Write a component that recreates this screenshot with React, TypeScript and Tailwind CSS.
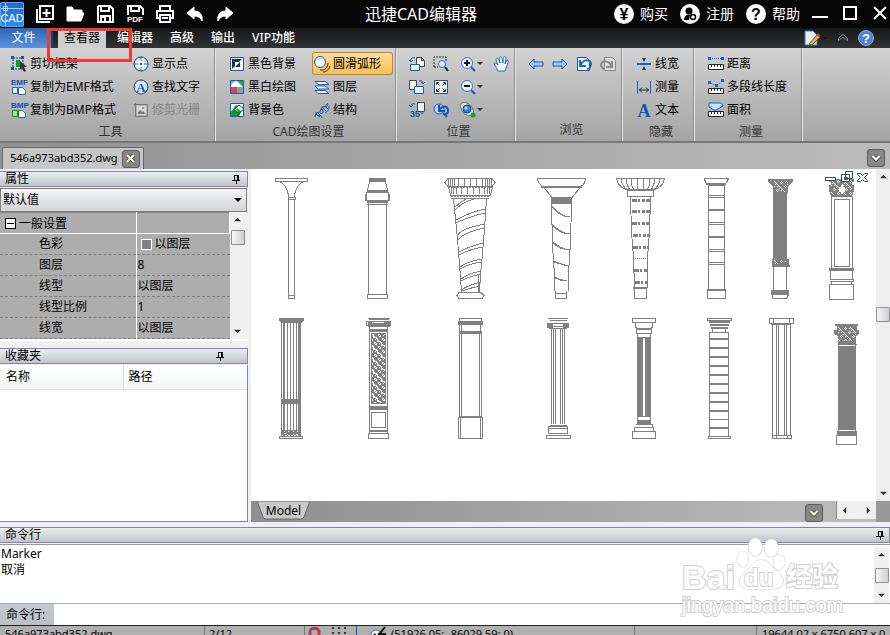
import { useState } from 'react';
import type { ReactNode } from 'react';

const tabs = ['查看器', '编辑器', '高级', '输出', 'VIP功能'];

const properties = [
  ['色彩', '以图层'],
  ['图层', '8'],
  ['线型', '以图层'],
  ['线型比例', '1'],
  ['线宽', '以图层'],
];

function Icon({ children, size = 16 }: { children: ReactNode; size?: number }) {
  return (
    <svg width={size} height={size} viewBox="0 0 16 16" fill="none" className="shrink-0 overflow-visible" aria-hidden="true">
      {children}
    </svg>
  );
}

const icons = {
  clip: (
    <Icon>
      <path d="M2 2h10v11H2z" stroke="#123a7c" strokeDasharray="2 1" />
      <path d="M0 0h3v3H0zM10 0h3v3h-3zM0 11h3v3H0z" fill="#1456b8" />
      <path d="M5 4h4v7H5z" fill="#129a2c" />
      <path d="M9 5v9l2-2 2 4 2-1-2-4h3z" fill="#333" />
    </Icon>
  ),
  emf: (
    <Icon>
      <text x="0" y="6" fill="#0f4fae" className="font-['Liberation_Sans'] text-[8px] font-bold">EMF</text>
      <path d="M1.5 8.5h5v6h-5z" fill="#e4efff" stroke="#1b62c4" />
      <path d="M7.5 8.5h4l3 3v4h-7z" fill="#fff" stroke="#1b62c4" />
    </Icon>
  ),
  bmp: (
    <Icon>
      <text x="0" y="6" fill="#0f4fae" className="font-['Liberation_Sans'] text-[8px] font-bold">BMP</text>
      <path d="M1.5 8.5h5v6h-5z" fill="#9be59b" stroke="#128a28" />
      <path d="M7.5 8.5h4l3 3v4h-7z" fill="#fff" stroke="#1d7a60" />
    </Icon>
  ),
  showPoint: (
    <Icon>
      <circle cx="8" cy="8" r="7" fill="#eef5ff" stroke="#1e3e6e" />
      <path d="M8 0v5M8 11v5M0 8h5M11 8h5" stroke="#2a6fc8" />
      <path d="M7 7h2v2H7z" fill="#1456b8" />
    </Icon>
  ),
  findText: (
    <Icon>
      <circle cx="8" cy="8" r="7" fill="#dcebff" stroke="#1e3e6e" />
      <path d="M8 0v3M0 8h3M13 8h3" stroke="#5b85b8" />
      <text x="8" y="13" textAnchor="middle" fill="#1456b8" className="font-['Liberation_Serif'] text-[13px] font-bold">A</text>
    </Icon>
  ),
  cropRaster: (
    <Icon>
      <path d="M2.5 1v13.5H15M1 2.500h13.500V15" stroke="#777" />
      <path d="M4 4h9v9H4z" fill="#d8d8d8" />
      <path d="m4 12 3-4 2 2 1-1 3 3z" fill="#777" />
      <path d="M9 5h2v2H9z" fill="#999" />
    </Icon>
  ),
  blackBg: (
    <Icon>
      <path d="M1.5 1.500h13v13h-13z" fill="#fff" stroke="#1b5ab8" />
      <path d="M3 3h10L3 13z" fill="#222f44" />
      <path d="M6 6h5v5H6z" fill="#fff" />
      <path d="M11 6v5H6z" fill="#222f44" />
    </Icon>
  ),
  blackWhite: (
    <Icon>
      <path d="M1.5 1.500h13v13h-13z" fill="#fff" stroke="#1b5ab8" />
      <path d="M8 2h6v6z" fill="#25a83c" />
      <path d="M2 8h6v6H2z" fill="#d84848" />
      <path d="M8 8h6v6H8z" fill="#999" />
      <path d="M2 6l4-4H2z" fill="#7da8e0" />
    </Icon>
  ),
  bgColor: (
    <Icon>
      <path d="M1.5 1.500h13v13h-13z" fill="#fff" stroke="#1b5ab8" />
      <path d="M2 14V9c3 0 2-5 6-6l5 6-3 5z" fill="#119a2b" />
      <path d="m5 8 5-5 5 4-5 4z" fill="#e2f5e4" stroke="#164d20" />
      <path d="m8 7 3 3" stroke="#129a2c" strokeWidth="2" />
    </Icon>
  ),
  smooth: (
    <Icon>
      <circle cx="6" cy="6" r="5.500" fill="#f2f7ff" stroke="#1b5ab8" />
      <path d="M6 14c5 1 8-3 8-7M9 16c4 0 6-3 7-6" stroke="#222" />
      <path d="M4 4c1-2 3-2 5-1" stroke="#aecbf2" />
    </Icon>
  ),
  layers: (
    <Icon>
      <path d="M1 11.500h10l4 3H4z" fill="#fff" stroke="#1a58b2" />
      <path d="M1 7h10l4 3H4z" fill="#fff" stroke="#1a58b2" />
      <path d="M1 2.500h10l4 3H4z" fill="#fff" stroke="#1a58b2" />
    </Icon>
  ),
  structure: (
    <Icon>
      <path d="M1 15c0-6 5-3 6-7s4-2 7-7M2 10c0 7 6 1 6 6M7 8c0-6 6-1 7-6M6 11c3 2 4-2 2-4m3 4c3-2 4-3 4-7" stroke="#1b55ad" />
      <path d="m3 10 4 4m-5-2 4 3m3-9 3 3m-1-5 3 3" stroke="#1b55ad" />
    </Icon>
  ),
  copyBack: (
    <Icon>
      <path d="M7.5 1.500h5l3 3v6h-8z" fill="#f6f6f6" stroke="#444" />
      <path d="M12.5 1v3.500H15" stroke="#444" />
      <path d="M1.5 8.500h9v6h-9z" fill="#e8f1ff" stroke="#1b5ab8" />
      <path d="M6 2C3 1 1 3 2 6M0 4l2 2 2-2" stroke="#1b5ab8" />
    </Icon>
  ),
  copyNext: (
    <Icon>
      <path d="M.5 1.500h7v9h-7z" fill="#f6f6f6" stroke="#444" />
      <path d="M5.5 7.500h9v7h-9z" fill="#e8f1ff" stroke="#1b5ab8" />
      <path d="M10 2c3-1 4 1 4 3M12 3l2 2 2-2" stroke="#1b5ab8" />
    </Icon>
  ),
  rotate: (
    <Icon>
      <path d="M8.5 .5h7v9h-7z" fill="#f6f6f6" stroke="#444" />
      <path d="M6 2C3 1 1 3 2 5M0 3l2 2 2-2" stroke="#1b5ab8" />
      <text x="1" y="15" fill="#174f9f" className="font-['Liberation_Sans'] text-[9px] font-bold">35°</text>
    </Icon>
  ),
  zoomWindow: (
    <Icon>
      <path d="M1 11V1h12v4M1 11h4" stroke="#222" strokeDasharray="2 1" />
      <circle cx="9" cy="8" r="3.500" fill="#dcecff" stroke="#3c6ca8" />
      <path d="m12 11 3 4" stroke="#222" strokeWidth="2" />
    </Icon>
  ),
  zoomExtents: (
    <Icon>
      <path d="M1.5 1.500h13v13h-13z" fill="#f1f1e8" stroke="#1d4f92" />
      <path d="M3.5 6V3.500H6M4 4l2.500 2.500M10 3.500h2.500V6M12 4 9.500 6.500M3.500 10v2.500H6M4 12l2.500-2.500M12.500 10v2.500H10M12 12 9.500 9.500" stroke="#333" />
    </Icon>
  ),
  zoomPrev: (
    <Icon>
      <circle cx="6" cy="7" r="5" fill="#b9d5fb" stroke="#1b5ab8" />
      <path d="m10 11 4 4" stroke="#1b5ab8" strokeWidth="2" />
      <path d="M6 3v6h6M6 9c3-6 9-6 9 0 0 2-1 3-3 3" stroke="#1456b8" strokeWidth="2" />
    </Icon>
  ),
  zoomIn: (
    <Icon>
      <circle cx="7" cy="7" r="5.500" fill="#eff6ff" stroke="#3974c2" />
      <path d="m11 11 4 4" stroke="#1b5ab8" strokeWidth="2" />
      <path d="M4 7h6M7 4v6" stroke="#111" strokeWidth="2" />
    </Icon>
  ),
  zoomOut: (
    <Icon>
      <circle cx="7" cy="7" r="5.500" fill="#eff6ff" stroke="#3974c2" />
      <path d="m11 11 4 4" stroke="#1b5ab8" strokeWidth="2" />
      <path d="M4 7h6" stroke="#111" strokeWidth="2" />
    </Icon>
  ),
  orbit: (
    <Icon>
      <ellipse cx="7" cy="7" rx="5" ry="8" transform="rotate(-42 7 7)" fill="#ddd" stroke="#777" />
      <circle cx="7" cy="7" r="4" fill="#3b7fd2" stroke="#174a90" />
      <circle cx="6" cy="6" r="1.500" fill="#b8dcff" />
      <circle cx="13" cy="13" r="2.500" fill="#18a030" />
    </Icon>
  ),
  pan: (
    <Icon>
      <path
        d="M5 15 3 11 1 8c0-2 2-1 4 1L3 4c0-2 2-2 3 0l1 3-1-5c1-2 2-1 3 0l1 5V2c1-2 3-1 3 0l-1 6 2-4c2 0 1 2 1 3l-2 5-1 3z"
        fill="#f5faff"
        stroke="#2b65b4"
      />
    </Icon>
  ),
  back: (
    <Icon>
      <path d="m1 8 5-5v3h9v4H6v3z" fill="#9fcaff" stroke="#1857b4" />
    </Icon>
  ),
  forward: (
    <Icon>
      <path d="m15 8-5-5v3H1v4h9v3z" fill="#9fcaff" stroke="#1857b4" />
    </Icon>
  ),
  viewBack: (
    <Icon>
      <path d="M1.5 1.500h9l3 3v10h-12z" fill="#f4f9ff" stroke="#1857b4" />
      <path d="M4 4v6h6M5 9c2-6 9-6 10-1 0 3-2 5-4 5" stroke="#1764cf" strokeWidth="2" />
    </Icon>
  ),
  viewNext: (
    <Icon>
      <path d="M4.5 1.500h8l3 3v10h-11z" fill="#ddd" stroke="#8c8c8c" />
      <path d="M12 5v6H6M11 10C9 4 2 4 1 9c0 2 2 4 4 4" stroke="#8c8c8c" strokeWidth="2" />
    </Icon>
  ),
  lineWidth: (
    <Icon>
      <path d="M1 7h14v2H1z" fill="#1764cf" />
      <path d="M6 2h4L8 6zM6 14h4l-2-4z" fill="#333" />
    </Icon>
  ),
  measure: (
    <Icon>
      <path d="M1.5 2v13M14.500 2v13" stroke="#1764cf" />
      <path d="M3 11h10M6 8.500 3.500 11 6 13.500M10 8.500l2.500 2.500-2.500 2.500" stroke="#222" />
    </Icon>
  ),
  text: (
    <Icon>
      <text x="8" y="15" textAnchor="middle" fill="#1456b8" className="font-['Liberation_Serif'] text-[18px] font-bold">A</text>
    </Icon>
  ),
  distance: (
    <Icon>
      <path d="M0 1h3v3H0zM13 1h3v3h-3z" fill="#1764cf" />
      <path d="M4 2.500h9" stroke="#1764cf" strokeDasharray="1 1" />
      <path d="M.5 8.500h15v5H.5z" fill="#fff" stroke="#222" />
      <path d="M3.500 9v2M6.500 9v2M9.500 9v2M12.500 9v2" stroke="#222" />
    </Icon>
  ),
  polyline: (
    <Icon>
      <path d="M0 2h3v3H0zM13 0h3v3h-3zM7 5h3v3H7z" fill="#1764cf" />
      <path d="m3 4 5 3 5-4" stroke="#1764cf" strokeDasharray="1 1" />
      <path d="M.5 9.500h15v5H.5z" fill="#fff" stroke="#222" />
      <path d="M3.500 10v2M6.500 10v2M9.500 10v2M12.500 10v2" stroke="#222" />
    </Icon>
  ),
  area: (
    <Icon>
      <path d="M1 1h12l2 3-7 4H6L1 5z" fill="#c9e1ff" stroke="#1764cf" />
      <path d="M.5 9.500h15v5H.5z" fill="#fff" stroke="#222" />
      <path d="M3.500 10v2M6.500 10v2M9.500 10v2M12.500 10v2" stroke="#222" />
    </Icon>
  ),
};

function Tool({ icon, label, active, disabled }: { icon: ReactNode; label: string; active?: boolean; disabled?: boolean }) {
  return (
    <button
      disabled={disabled}
      className={`flex h-[23px] items-center gap-[3px] whitespace-nowrap pl-[2px] ${active ? 'rounded-[3px] bg-gradient-to-b from-[#fddf9c] to-[#fbbd4c] pr-3 inset-ring inset-ring-[#b98a3c]' : ''} ${disabled ? 'text-[#858585]' : ''}`}
    >
      {icon}
      {label}
    </button>
  );
}

function IconTool({ icon, label, menu }: { icon: ReactNode; label: string; menu?: boolean }) {
  return (
    <button aria-label={label} className="flex h-[23px] items-center gap-[1px]">
      {icon}
      {menu && <span className="border-x-3 border-t-3 border-x-transparent border-t-[#333]" />}
    </button>
  );
}

function Group({ title, width, children }: { title: string; width: string; children: ReactNode }) {
  return (
    <section className={`flex shrink-0 flex-col border-r border-[#8f8f8f] pt-1 shadow-[1px_0_0_#e6e6e6] ${width}`}>
      <div className="flex h-[69px]">{children}</div>
      <h2 className="pl-[7px] text-center leading-[22px] text-[#333]">{title}</h2>
    </section>
  );
}

function Pin() {
  return (
    <svg width="8" height="10" viewBox="0 0 8 10" fill="none" stroke="#000" shapeRendering="crispEdges" aria-hidden="true">
      <path d="M2 6V1h4v5M5.500 1v5M0 6.500h8M4 6v4" />
    </svg>
  );
}

function PanelHeader({ title, pinClass = 'pr-[7px]' }: { title: string; pinClass?: string }) {
  return (
    <div className={`flex h-[16px] shrink-0 items-center justify-between border border-l-0 border-[#83869a] bg-gradient-to-b from-[#eceef0] to-[#c0c4cb] pl-[5px] ${pinClass}`}>
      <h2 className="leading-[14px]">{title}</h2>
      <button aria-label="固定">
        <Pin />
      </button>
    </div>
  );
}

function ScrollArrow({ dir }: { dir: 'up' | 'down' | 'left' | 'right' }) {
  const paths = { up: 'M0 6h8L4 2z', down: 'M0 2h8L4 6z', left: 'M6 0v8L2 4z', right: 'M2 0v8l4-4z' };
  return (
    <button aria-label={dir} className="flex size-[15px] items-center justify-center">
      <svg width="7" height="7" viewBox="0 0 8 8" fill="#333" aria-hidden="true">
        <path d={paths[dir]} />
      </svg>
    </button>
  );
}

function Thumb() {
  return <div className="mx-auto h-[15px] w-[14px] shrink-0 rounded-[1px] border border-[#8e8e94] bg-gradient-to-r from-[#f6f6f6] to-[#cfcfd3]" />;
}

function ChevronButton() {
  return (
    <button aria-label="更多" className="flex size-[18px] items-center justify-center rounded-[3px] border border-[#5c5c5c] bg-[#878787]">
      <svg width="10" height="8" viewBox="0 0 10 8" fill="none" aria-hidden="true">
        <path d="m1.500 2 3.500 3.500L8.500 2" stroke="#5b5630" strokeWidth="4" />
        <path d="m1.500 2 3.500 3.500L8.500 2" stroke="#fff" strokeWidth="2" />
      </svg>
    </button>
  );
}

// White flecks scattered over a solid ornament
function Flecks({ x, y, w, h, step = 3 }: { x: number; y: number; w: number; h: number; step?: number }) {
  let d = '';
  for (let j = 0; j < h; j++) {
    for (let i = 0; i < w; i++) {
      if ((i * 7 + j * 5 + ((i * j) % 4)) % (step * 3) < 2) d += `M${x + i} ${y + j}h1v1h-1z`;
    }
  }
  return <path d={d} fill="#fff" stroke="none" />;
}

function Bar(props: { x: number; y: number; w: number; h: number }) {
  return <rect x={props.x} y={props.y} width={props.w} height={props.h} fill="#808080" stroke="none" />;
}

function Drawing() {
  return (
    <svg
      width="625"
      height="332"
      viewBox="251 169 625 332"
      fill="none"
      stroke="#808080"
      shapeRendering="crispEdges"
      role="img"
      aria-label="546a973abd352.dwg"
    >
      {/* top row */}
      <path d="M275.500 178.500h32v3h-32zM280 181.500c4 3 8 6 8.500 16M303 181.500c-4 3-8 6-8.500 16M288.500 199v99.500h6V199M288 197.500h7v2h-7zM288.500 295.500h6" />
      <Bar x={369} y={178} w={17} h={4} />
      <path d="M369.500 182l-2 8h20l-2-8M366.500 192h22v8h-22zM366.500 193l-1 2v5h24v-5l-1-2M367 204.500h21M368.500 200v94h18v-94M367.500 294.500h20v4h-20z" />
      <Bar x={367} y={190} w={21} h={2} />
      <Bar x={367} y={200} w={21} h={3} />

      <path d="M448 178.500h44l3 4-3 4h-44l-3-4zM448.500 187l2 8h40l2-8M450 195.500h40M451 198.500h38" />
      <path d="M448.500 179v7M450.500 179v7M452.500 179v7M454.500 179v7M458.500 179v7M464.500 179v7M470.500 179v7M476.500 179v7M482.500 179v7M485.500 179v7M487.500 179v7M489.500 179v7M491.500 179v7" />
      <path d="M451.500 187v7M453.500 187v7M456.500 187v7M461.500 187v7M467.500 187v7M473.500 187v7M479.500 187v7M484.500 187v7M487.500 187v7M489.500 187v7" />
      <path d="M448 187h44M451 196h38" strokeDasharray="2 1" />
      <path d="M453.500 199l2 20 2 20 2 25 2 28M486.500 199l-2 30-2 25-2 20-1 18M459 292.500h22l3 3-2 3h-23l-2-3zM478.500 275v17" />
      <path d="M454 208q6-6 12-9M454 211q8-9 20-12M456 220q12-7 29-11M456 223q12-6 29-10M457 238q0-9 28-14M458 240q6-8 27-12M459 252q11-6 24-9M459 255q11-6 24-8M460 267q6-5 22-8M460 269q8-5 22-7M461 279q6-5 20-8M461 281q6-4 20-7M461 290q8-5 19-8M462 291q8-3 18-5" />

      <path d="M537.500 178.500h48q0 5-5 8.500l-8 10h-21l-8-10q-6-3.500-6-8.500zM551.500 203l1 42 2 30v16M571.500 203l-1 40-2 30v18M555.500 291v7.500h11V291M556 293.500h11" />
      <path d="M541 186.500h41M541 187.500h41" />
      <Bar x={551} y={197} w={21} h={7} />
      <path d="M552 206q8 10 18 11M552 224q8 9 18 10M552 241q8 8 18 9M553 261l15 5M554 277q6 3 13 4M552 207q8 10 18 10M552 225q8 9 18 9M552 242q8 8 18 8M554 262l14 4M555 278q6 3 12 3" />

      <path d="M616.500 178.500h48q-1 8-10 11h-28q-9-3-10-11M621 179q1 8 7 11M626 179q1 7 4 11M631 179q0 7 3 11M637.500 179v11M643.500 179v11M650 179q0 7-3 11M655 179q-1 7-4 11M660 179q-1 8-7 11M627.500 190.500h26v6h-26zM630.500 197l1 35 2 25 1 31M650.500 197l-1 35-2 25v31M634.500 288v10.500h12V288" />
      <path d="M632 200h18M632 211.500h18M632 223h17M633 235h16M633 247h15M634 270h13M635 282h12" strokeWidth="3" strokeDasharray="5 1 2 2 3 1" />
      <path d="M635 258.500h12" strokeDasharray="1 1" />
      <Bar x={633} y={287} w={14} h={2} />

      <path d="M704.500 178.500h24l-2 4-2 3h-16l-3-3zM708.500 185v105M724.500 185v105M708 195.500h17M708 197.500h17M708 222.500h17M708 224.500h17M708 249.500h17M708 251.500h17M708 262.500h17M708 264.500h17M707.500 290.500h18v8h-18z" />
      <path d="M706 184h20M708 210h17M708 237h17M707 290h19" strokeWidth="2" />

      <path d="M768 179h25v3l-5 4v7h-15v-7l-5-4z" fill="#808080" stroke="none" />
      <Flecks x={774} y={181} w={14} h={11} step={4} />
      <Bar x={773} y={192} w={14} h={68} />
      <Bar x={772} y={259} w={17} h={6} />
      <Flecks x={774} y={260} w={12} h={4} step={4} />
      <path d="M772 265.500h17v1h-17M773.500 267v23M786.500 267v23M770.500 294.500h18l-2 4h-14v-4" />
      <Bar x={771} y={290} w={18} h={4} />

      <path d="M829 179h25v3h-2v3h2v6l-2 5h-21l-2-5v-6h2v-3h-2z" fill="#808080" stroke="none" />
      <Flecks x={831} y={180} w={21} h={15} step={4} />
      <path d="M839 187h2v-2h2v2h2v5h-2v2h-2v-2h-2z" fill="#fff" stroke="none" />
      <path d="M831.500 196.500h21v72h-21zM834.500 199.500h15v67h-15zM829.500 268.500h24v2h-24zM830.500 271v8h22v-8M829.500 279.500h24v2h-24M831.500 282v2h20v-2M829.500 284.500h24v15h-24z" />
      <Bar x={829} y={268} w={25} h={3} />

      {/* bottom row */}
      <path d="M279 318h25v3l-2 1v1h-21v-1l-2-1z" fill="#808080" stroke="none" />
      <path d="M281.500 323v113M283.500 323v113M284.500 323v113M287.500 323v113M290.500 323v113M293.500 323v113M296.500 323v113M298.500 323v113M299.500 323v113M300.500 323v113M279.500 436.500h23v2h-23z" />
      <Bar x={281} y={399} w={20} h={5} />
      <Bar x={281} y={430} w={20} h={5} />
      <Flecks x={284} y={431} w={14} h={4} />

      <path d="M368 318.500h22M369 319.500h20M366.500 321.500h24v4h-24zM369 326.500h19M387.500 327v106M369.500 327v106M371.500 412.500h14v15h-14zM368.500 433.500h20v5h-20z" />
      <Bar x={368} y={321} w={4} h={6} />
      <Bar x={384} y={321} w={6} h={6} />
      <Bar x={371} y={323} w={14} h={2} />
      <Bar x={369} y={329} w={19} h={3} />
      <Bar x={371} y={333} w={15} h={71} />
      <Flecks x={372} y={334} w={13} h={69} step={2} />
      <Bar x={369} y={406} w={19} h={4} />
      <Bar x={369} y={430} w={19} h={2} />

      <path d="M459.500 318.500h22v3h-22zM459.500 324v8M461.500 324v8M480.500 324v8M459.500 334v83M461.500 334v83M479.500 334v83M481.500 334v83M458.500 417.500h24v21h-24zM460.500 417v21M480.500 417v21" />
      <Bar x={458} y={321} w={25} h={4} />
      <Bar x={459} y={331} w={23} h={3} />
      <Bar x={459} y={416} w={23} h={2} />

      <path d="M548 318.500h20M549.500 320.500h17M547.500 323.500h21v3h-21zM549 328.500h18M551.500 329v95M553.500 329v95M555.500 329v95M560.500 329v95M562.500 329v95M564.500 329v95M550 425.500h17M548.500 426.500h19v7h-19zM548 428.500h20M546.500 435.500h24v3h-24z" />
      <Bar x={547} y={323} w={6} h={5} />
      <Bar x={563} y={323} w={6} h={5} />

      <path d="M632.500 318.500h23v4h-23zM635.500 323v4l1.500 2h14l1.500-2v-4M636.500 330v3h15v-3M637.500 333.500h13v4h-13zM637.500 416.500h13v4h-13zM636 424.500h16v3h-16M634.500 427.500h19v4h-19zM632.500 431.500h23v7h-23z" />
      <Bar x={636} y={328} w={16} h={2} />
      <Bar x={637} y={337} w={6} h={80} />
      <Bar x={645} y={337} w={6} h={80} />
      <Bar x={637} y={420} w={14} h={4} />

      <path d="M707.500 318.500h24v2h-24zM712.500 329v3h13v-3M709.500 332.500h19v104h-19zM708.500 436.500h22v2h-22zM709 419.500h20" />
      <Bar x={709} y={321} w={21} h={2} />
      <Bar x={710} y={324} w={19} h={2} />
      <Bar x={711} y={327} w={17} h={2} />
      <path d="M709 339h20M709 348h20M709 357h20M709 366h20M709 375h20M709 384h20M709 393h20M709 402h20M709 411h20M709 428h20" strokeWidth="2" />

      <path d="M769.500 318.500h24v5h-24zM773.500 318v5M789.500 318v5M771 324.500h20M772.500 324v111M776.500 324v111M778.500 324v111M784.500 324v111M786.500 324v111M790.500 324v111M772.500 435.500h19v3h-19zM776.500 435v3M787.500 435v3" />

      <path d="M835 324h23v2h-1v4h2v4l-3 2v8h-18v-8l-4-2v-4h3v-4h-2z" fill="#808080" stroke="none" />
      <Flecks x={838} y={327} w={18} h={14} step={4} />
      <path d="M837.500 344.500h19M838.500 345v90M855.500 345v90M837.500 431.500h19v3h-19zM836.500 435.500h20v9h-20z" />
      <Bar x={838} y={346} w={18} h={84} />
      <Bar x={837} y={432} w={20} h={3} />

      {/* child window buttons */}
      <g stroke="#34495e" fill="#fff" shapeRendering="auto">
        <path d="M825.500 177.500h10v3h-10zM845.500 171.500h7v7h-7zM841.500 174.500h8v7h-8zM844.500 177.500h3v2h-3z" />
        <path d="M857.500 173.500h3l2 2 2-2h3v1l-3 3 3 3v1h-3l-2-2-2 2h-3v-1l3-3-3-3z" />
      </g>
    </svg>
  );
}

function RoundIcon({ children }: { children: ReactNode }) {
  return (
    <svg width="20" height="20" viewBox="0 0 20 20" aria-hidden="true">
      <circle cx="10" cy="10" r="10" fill="#fff" />
      {children}
    </svg>
  );
}

function TitleBar() {
  const quick: [string, ReactNode][] = [
    ['新建', <path key="new" d="M4 1h13v13H4zM1 4v13h13M10.500 4v8M6.500 8h8" strokeWidth="2" />],
    ['打开', <path key="open" d="M1 16V2h5l2 3h8v3M1 16l4-8h13l-3 8z" fill="#fff" />],
    ['保存', <path key="save" d="M2 1h12l3 3v13H2V1m3 0v5h8V1M5 17v-6h9v6M6 12h3v4" strokeWidth="2" />],
    [
      '另存为PDF',
      <g key="pdf">
        <path d="M2 10V1h12l3 3v6M5 1v5h8V1" strokeWidth="2" />
        <text x="9" y="17" textAnchor="middle" fill="#fff" stroke="none" className="font-['Liberation_Sans'] text-[8px] font-bold">
          PDF
        </text>
      </g>,
    ],
    ['打印', <path key="print" d="M4 5V1h10v4M4 13H1V6h16v7h-3M4 10h10v7H4zM6 13h6" strokeWidth="2" />],
    ['撤销', <path key="undo" d="M1 8 8 2v4c6 0 9 4 8 10-1-3-4-5-8-5v3z" fill="#fff" />],
    ['重做', <path key="redo" d="m17 8-7-6v4C4 6 1 10 2 16c1-3 4-5 8-5v3z" fill="#fff" />],
  ];
  return (
    <header className="grid h-[28px] shrink-0 grid-cols-[1fr_auto_1fr] items-center bg-[#070707] text-sm text-white">
      <div className="flex items-center gap-3">
        <div className="relative flex h-[25px] w-6 items-end justify-center rounded-[2px] bg-gradient-to-b from-[#2a62c8] to-[#2090ee] font-['Liberation_Sans'] text-[11px] leading-[18px] inset-ring inset-ring-[#5fa5ee]">
          <svg width="24" height="25" viewBox="0 0 24 25" fill="none" stroke="#a9d0f8" className="absolute inset-0" aria-hidden="true">
            <path d="M5.500 1v23M1 6.500h22M3.500 4.500h4v4h-4z" />
          </svg>
          <span className="relative">CAD</span>
        </div>
        {quick.map(([label, path]) => (
          <button key={label} aria-label={label}>
            <svg width="18" height="18" viewBox="0 0 18 18" fill="none" stroke="#fff" aria-hidden="true">
              {path}
            </svg>
          </button>
        ))}
      </div>
      <h1 className="pr-12 text-base leading-7">迅捷CAD编辑器</h1>
      <div className="flex items-center justify-end gap-3 pr-[2px]">
        <button className="flex items-center gap-[6px]">
          <RoundIcon>
            <text x="10" y="16" textAnchor="middle" className="font-['Liberation_Sans'] text-[16px] font-bold">¥</text>
          </RoundIcon>
          购买
        </button>
        <button className="flex items-center gap-[6px]">
          <RoundIcon>
            <circle cx="9" cy="7" r="3.500" />
            <path d="M4 16c0-4 3-6 6-5l-1 5z" />
            <circle cx="13" cy="13" r="2.500" fill="#fff" stroke="#000" strokeWidth="1.500" />
          </RoundIcon>
          注册
        </button>
        <button className="flex items-center gap-[6px]">
          <RoundIcon>
            <text x="10" y="16" textAnchor="middle" className="font-['Liberation_Sans'] text-[16px] font-bold">?</text>
          </RoundIcon>
          帮助
        </button>
        <div className="flex gap-[14px]">
          <button aria-label="最小化">
            <svg width="16" height="16" viewBox="0 0 16 16" stroke="#fff" strokeWidth="2"><path d="M0 11h16" /></svg>
          </button>
          <button aria-label="最大化">
            <svg width="16" height="16" viewBox="0 0 16 16" fill="none" stroke="#fff" strokeWidth="2"><path d="M2 1h12v12H2z" /></svg>
          </button>
          <button aria-label="关闭">
            <svg width="16" height="16" viewBox="0 0 16 16" stroke="#fff" strokeWidth="2"><path d="m2 1 12 12M14 1 2 13" /></svg>
          </button>
        </div>
      </div>
    </header>
  );
}

function Ribbon() {
  return (
    <div className="flex h-[95px] shrink-0 overflow-hidden border-b-2 border-[#777] bg-gradient-to-b from-[#d2d2d2] to-[#a4a4a4]">
      <Group title="工具" width="w-[215px]">
        <div className="w-[122px] pl-[9px]">
          <Tool icon={icons.clip} label="剪切框架" />
          <Tool icon={icons.emf} label="复制为EMF格式" />
          <Tool icon={icons.bmp} label="复制为BMP格式" />
        </div>
        <div className="pl-[9px]">
          <Tool icon={icons.showPoint} label="显示点" />
          <Tool icon={icons.findText} label="查找文字" />
          <Tool icon={icons.cropRaster} label="修剪光栅" disabled />
        </div>
      </Group>
      <Group title="CAD绘图设置" width="w-[181px]">
        <div className="w-[97px] pl-3">
          <Tool icon={icons.blackBg} label="黑色背景" />
          <Tool icon={icons.blackWhite} label="黑白绘图" />
          <Tool icon={icons.bgColor} label="背景色" />
        </div>
        <div>
          <Tool icon={icons.smooth} label="圆滑弧形" active />
          <Tool icon={icons.layers} label="图层" />
          <Tool icon={icons.structure} label="结构" />
        </div>
      </Group>
      <Group title="位置" width="w-[119px]">
        <div className="flex gap-2 pl-[13px]">
          <div>
            <IconTool icon={icons.copyBack} label="上一视图" />
            <IconTool icon={icons.copyNext} label="下一视图" />
            <IconTool icon={icons.rotate} label="旋转" />
          </div>
          <div>
            <IconTool icon={icons.zoomWindow} label="窗口缩放" />
            <IconTool icon={icons.zoomExtents} label="全部显示" />
            <IconTool icon={icons.zoomPrev} label="上次缩放" />
          </div>
          <div className="pr-[2px] pl-[3px]">
            <IconTool icon={icons.zoomIn} label="放大" menu />
            <IconTool icon={icons.zoomOut} label="缩小" menu />
            <IconTool icon={icons.orbit} label="三维视图" menu />
          </div>
          <IconTool icon={icons.pan} label="平移" />
        </div>
      </Group>
      <Group title="浏览" width="w-[107px]">
        <div className="flex gap-2 pl-[13px]">
          <IconTool icon={icons.back} label="后退" />
          <IconTool icon={icons.forward} label="前进" />
          <IconTool icon={icons.viewBack} label="撤销视图" />
          <IconTool icon={icons.viewNext} label="重做视图" />
        </div>
      </Group>
      <Group title="隐藏" width="w-[72px]">
        <div className="pl-3">
          <Tool icon={icons.lineWidth} label="线宽" />
          <Tool icon={icons.measure} label="测量" />
          <Tool icon={icons.text} label="文本" />
        </div>
      </Group>
      <Group title="测量" width="w-[108px]">
        <div className="pl-3">
          <Tool icon={icons.distance} label="距离" />
          <Tool icon={icons.polyline} label="多段线长度" />
          <Tool icon={icons.area} label="面积" />
        </div>
      </Group>
    </div>
  );
}

function Watermark() {
  return (
    <div className="pointer-events-none absolute right-[48px] bottom-[10px] w-[160px] font-['Liberation_Sans','Noto_Sans_CJK_SC',sans-serif] text-white [-webkit-text-stroke:2px_#d0d0d0] [paint-order:stroke_fill]">
      <svg width="50" height="56" viewBox="0 0 44 56" preserveAspectRatio="none" fill="#fff" stroke="#d0d0d0" className="absolute bottom-[22px] left-[54px]" aria-hidden="true">
        <ellipse cx="17" cy="10" rx="6" ry="9" />
        <ellipse cx="31" cy="11" rx="6" ry="9" />
        <ellipse cx="6" cy="22" rx="5" ry="8" />
        <ellipse cx="38" cy="25" rx="5" ry="8" />
        <path d="M22 23c-7 0-9 8-15 13-7 7-4 16 4 16h22c8 0 12-9 4-17-6-5-8-12-15-12z" />
      </svg>
      <div className="relative flex items-end font-bold">
        <span className="w-[62px] text-[34px] leading-[36px]">Bai</span>
        <span className="w-[42px] text-2xl leading-[34px]">du</span>
        <span className="text-[26px] leading-[36px]">经验</span>
      </div>
      <div className="relative text-[20px] leading-5 whitespace-nowrap">jingyan.baidu.com</div>
    </div>
  );
}

export default function App() {
  const [activeTab, setActiveTab] = useState('查看器');
  const [command, setCommand] = useState('');

  return (
    <div className="relative flex h-screen flex-col overflow-hidden bg-[#f0f0f0] font-['Noto_Sans','Noto_Sans_CJK_SC',sans-serif] text-xs text-black">
      <TitleBar />

      <nav className="flex h-5 shrink-0 items-stretch bg-gradient-to-b from-[#151617] to-[#333436] leading-5 text-white">
        <button className="w-[53px] border-r-2 border-[#173d7c] bg-gradient-to-b from-[#2f64b8] to-[#5b94dd] pr-1">文件</button>
        <div className="flex gap-[5px] pl-[5px]">
          {tabs.map((tab) => (
            <button
              key={tab}
              onClick={() => setActiveTab(tab)}
              className={`px-[6px] ${tab === activeTab ? 'bg-[#cfcfcf] text-black' : 'font-medium'}`}
            >
              {tab}
            </button>
          ))}
        </div>
        <div className="ml-auto flex items-center gap-[9px] pr-4">
          <button aria-label="样式" className="flex items-center gap-[2px]">
            <Icon>
              <path d="M1 1h8l4 4v10H1z" fill="#e8f1ff" stroke="#3974c2" />
              <path d="m5 14 8-9 3 2-8 8z" fill="#f0ae28" stroke="#7c5212" />
              <path d="m12 5 2-2 2 2-1 2z" fill="#cc3a2a" />
            </Icon>
            <span className="border-x-3 border-t-3 border-x-transparent border-t-[#111]" />
          </button>
          <button aria-label="折叠功能区">
            <Icon size={12}>
              <path d="M2 8.500 8 3l6 5.500v3L8 7l-6 4.500z" stroke="#aaa" />
            </Icon>
          </button>
          <button aria-label="帮助">
            <Icon>
              <circle cx="8" cy="8" r="7.500" fill="#4b83d2" stroke="#86b1ea" />
              <text x="8" y="13" textAnchor="middle" fill="#fff" className="font-['Liberation_Sans'] text-[13px] font-bold">?</text>
            </Icon>
          </button>
        </div>
      </nav>

      <Ribbon />

      <div className="flex h-[26px] shrink-0 items-end justify-between bg-gradient-to-r from-[#929292] to-[#bcbcbc] pr-[5px] pl-[2px]">
        <div className="flex h-[22px] items-center gap-1 rounded-t-[2px] border border-b-0 border-[#666] bg-[#c6c6c6] pl-[7px] pr-[3px] text-[11px]">
          546a973abd352.dwg
          <button aria-label="关闭文件" className="flex size-[18px] items-center justify-center rounded-[3px] border border-[#5c5c5c] bg-[#878787]">
            <svg width="9" height="9" viewBox="0 0 9 9" aria-hidden="true">
              <path d="m1 1 7 7M8 1 1 8" stroke="#5b5630" strokeWidth="4" />
              <path d="m1 1 7 7M8 1 1 8" stroke="#fff" strokeWidth="2" />
            </svg>
          </button>
        </div>
        <div className="pb-[2px]">
          <ChevronButton />
        </div>
      </div>

      <main className="flex min-h-0 flex-1">
        <aside className="flex w-[251px] shrink-0 flex-col pt-[2px] pr-[3px]">
          <PanelHeader title="属性" />
          <div className="relative mt-[1px] mr-[1px] h-6 shrink-0">
            <select aria-label="对象" className="h-full w-full appearance-none border border-[#7d7d7d] bg-gradient-to-b from-[#f4f4f4] to-[#d2d4d6] pl-[2px]">
              <option>默认值</option>
            </select>
            <span className="pointer-events-none absolute top-[10px] right-[5px] border-x-4 border-t-4 border-x-transparent border-t-black" />
          </div>
          <div className="flex shrink-0 border-b-2 border-white pr-[2px]">
            <table className="flex-1 table-fixed border-collapse bg-[#adadad]">
              <thead>
                <tr className="h-[21px] border-t border-b border-t-[#858585] border-b-white">
                  <th className="w-[136px] border-r border-r-white pl-[5px] text-left font-normal">
                    <span className="flex items-center gap-[3px] leading-[19px]">
                      <button aria-label="折叠" className="flex size-[11px] items-center justify-center border border-black bg-white">
                        <span className="h-px w-[7px] bg-black" />
                      </button>
                      一般设置
                    </span>
                  </th>
                  <th className="border-r border-r-white" />
                </tr>
              </thead>
              <tbody>
                {properties.map(([name, value]) => (
                  <tr key={name} className="h-[21px] border-b border-dashed border-[#808080] leading-5">
                    <td className="border-r border-solid border-r-white pl-[39px]">{name}</td>
                    <td className="pl-[1px]">
                      <span className="flex items-center">
                        {name === '色彩' && <span className="mr-[3px] ml-[3px] size-[11px] border border-white bg-[#808080]" />}
                        {value}
                      </span>
                    </td>
                  </tr>
                ))}
              </tbody>
            </table>
            <div className="flex w-[16px] flex-col bg-[#f0f0f0]">
              <ScrollArrow dir="up" />
              <div className="flex-1 pt-[3px]">
                <Thumb />
              </div>
              <ScrollArrow dir="down" />
            </div>
          </div>
          <div className="flex min-h-0 flex-1 flex-col pt-[7px]">
            <PanelHeader title="收藏夹" pinClass="pr-[23px]" />
            <div className="mt-[1px] min-h-0 flex-1 border-r border-b border-[#83869a] bg-white">
              <table className="w-full">
                <thead>
                  <tr className="h-6 border-b border-[#dcdcdc] bg-gradient-to-b from-white to-[#f4f5f6] text-left">
                    <th className="w-[123px] border-r border-[#dcdcdc] pl-[6px] font-normal">名称</th>
                    <th className="pl-[5px] font-normal">路径</th>
                  </tr>
                </thead>
              </table>
            </div>
          </div>
        </aside>

        <section className="flex min-w-0 flex-1 flex-col">
          <div className="flex min-h-0 flex-1 bg-white">
            <div className="min-w-0 flex-1 overflow-hidden">
              <Drawing />
            </div>
            <div className="flex w-[14px] flex-col items-center bg-[#eee]">
              <ScrollArrow dir="up" />
              <div className="grow-3" />
              <Thumb />
              <div className="grow-4" />
              <ScrollArrow dir="down" />
            </div>
          </div>
          <div className="flex h-[21px] shrink-0 bg-gradient-to-r from-[#8f8f8f] to-[#bebebe]">
            <button className="relative ml-[6px] h-[19px] w-[53px] leading-4">
              <svg width="53" height="19" viewBox="0 0 53 19" className="absolute inset-0" aria-hidden="true">
                <path d="M0 0l6 16 2 2h37l2-2 6-16z" fill="#c9c9c9" stroke="#666" />
              </svg>
              <span className="relative">Model</span>
            </button>
            <div className="mr-[13px] ml-auto pt-[3px]">
              <ChevronButton />
            </div>
            <div className="flex h-[18px] w-10 items-center justify-between border-l border-[#888] bg-[#f0f0f0]">
              <ScrollArrow dir="left" />
              <ScrollArrow dir="right" />
            </div>
            <div className="w-[14px] bg-[#999]" />
          </div>
        </section>
      </main>

      <section className="relative shrink-0 pt-[5px]">
        <PanelHeader title="命令行" pinClass="pr-[5px]" />
        <div className="mt-[1px] flex h-[59px] justify-between border-t border-[#999] bg-white">
          <div className="pt-[1px] pl-[1px] leading-4">
            <p>Marker</p>
            <p>取消</p>
          </div>
          <div className="mt-[2px] mr-[1px] flex w-[15px] flex-col bg-[#f0f0f0]">
            <ScrollArrow dir="up" />
            <div className="flex flex-1 flex-col justify-center">
              <Thumb />
            </div>
            <ScrollArrow dir="down" />
          </div>
        </div>
        <div className="flex h-[22px] border-t border-[#a5acb8] bg-white">
          <label htmlFor="command" className="w-[54px] bg-gradient-to-b from-[#c5cad1] to-[#b9bec8] pl-[6px] leading-[21px]">
            命令行:
          </label>
          <input id="command" value={command} onChange={(e) => setCommand(e.target.value)} className="min-w-0 flex-1 px-1 outline-none" />
        </div>
        <Watermark />
      </section>

      <footer className="flex h-[10px] shrink-0 overflow-hidden border-t border-[#222] bg-[#b0b0b0] text-[11px] leading-[16px] whitespace-nowrap">
        <span className="w-[205px] shrink-0 border-r border-[#777] pl-[5px]">546a973abd352.dwg</span>
        <span className="w-[100px] shrink-0 border-r border-[#777] pl-1">2/12</span>
        <span className="flex shrink-0 gap-2 px-[3px]">
          <Icon>
            <path d="M2 12V6c0-5 9-5 9 0v6" stroke="#c93648" strokeWidth="3" />
            <path d="M2 12V6c0-2 1-3 3-4" stroke="#3c70c4" />
          </Icon>
          <Icon>
            <path d="M0 2h16M0 7h16M0 12h16" stroke="#333" strokeWidth="2" strokeDasharray="2 4" />
          </Icon>
          <span className="w-[6px] border-l border-[#1b5ab8]" />
          <Icon>
            <circle cx="6" cy="9" r="5" fill="#e8f4e8" stroke="#4a70a0" />
            <path d="m4 8 3 3 8-10M8 8h8" stroke="#111" strokeWidth="2" />
          </Icon>
        </span>
        <span className="min-w-0 flex-1 pl-[2px]">(51926.05; -86029.59; 0)</span>
        <span className="w-[122px] shrink-0 border-l border-[#777]" />
        <span className="w-[134px] shrink-0 border-l border-[#777] pl-[5px]">19644.02 x 6750.607 x 0...</span>
      </footer>

      {/* highlight around the viewer tab */}
      <div className="pointer-events-none absolute top-[28px] left-[47px] h-[34px] w-[85px] border-3 border-[#f03a34]" />
    </div>
  );
}
